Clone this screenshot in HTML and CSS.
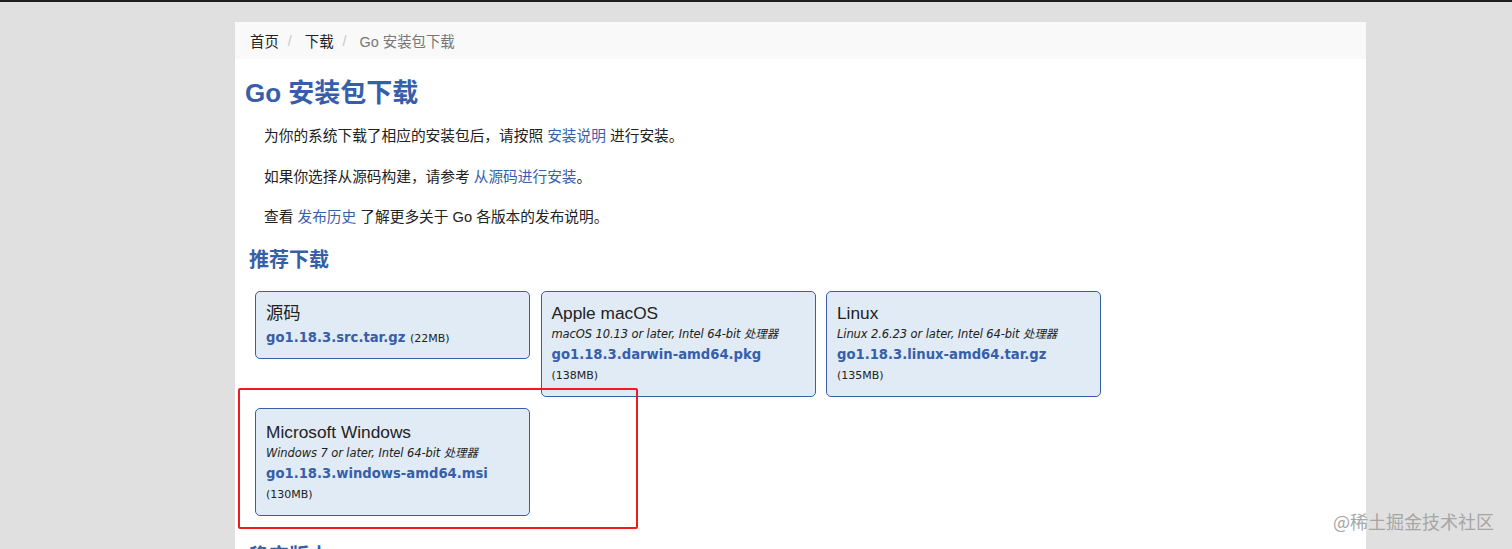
FILE: index.html
```html
<!DOCTYPE html>
<html lang="zh-CN">
<head>
<meta charset="utf-8">
<title>Go 安装包下载</title>
<link rel="stylesheet" href="styles.css">
</head>
<body>
<div class="topbar"></div>
<main class="panel">
  <nav class="crumbs">
    <a href="#">首页</a><span class="sep">/</span><a href="#">下载</a><span class="sep">/</span><span class="current">Go 安装包下载</span>
  </nav>
  <div class="content">
    <h1 class="title">Go 安装包下载</h1>
    <p class="para">为你的系统下载了相应的安装包后，请按照 <a href="#">安装说明</a> 进行安装。</p>
    <p class="para">如果你选择从源码构建，请参考 <a href="#">从源码进行安装</a>。</p>
    <p class="para">查看 <a href="#">发布历史</a> 了解更多关于 Go 各版本的发布说明。</p>
    <h2 class="section">推荐下载</h2>
    <div class="downloads">
      <a class="card card-src" href="#">
        <div class="platform">源码</div>
        <div class="filename">go1.18.3.src.tar.gz <span class="size">(22MB)</span></div>
      </a>
      <a class="card" href="#">
        <div class="platform">Apple macOS</div>
        <div class="reqs">macOS 10.13 or later, Intel 64-bit 处理器</div>
        <div class="filename">go1.18.3.darwin-amd64.pkg</div>
        <div class="size-line">(138MB)</div>
      </a>
      <a class="card" href="#">
        <div class="platform">Linux</div>
        <div class="reqs">Linux 2.6.23 or later, Intel 64-bit 处理器</div>
        <div class="filename">go1.18.3.linux-amd64.tar.gz</div>
        <div class="size-line">(135MB)</div>
      </a>
      <a class="card card-win" href="#">
        <div class="platform">Microsoft Windows</div>
        <div class="reqs">Windows 7 or later, Intel 64-bit 处理器</div>
        <div class="filename">go1.18.3.windows-amd64.msi</div>
        <div class="size-line">(130MB)</div>
      </a>
    </div>
    <h2 class="section section-next">稳定版本</h2>
  </div>
</main>
<div class="annotation"></div>
<div class="watermark">@稀土掘金技术社区</div>
</body>
</html>
```
FILE: styles.css
```css
html, body {
  margin: 0;
  padding: 0;
}
body {
  position: relative;
  height: 549px;
  overflow: hidden;
  background: #e0e0e0;
  font-family: "Liberation Sans", "Noto Sans CJK SC", sans-serif;
  font-size: 14.4px;
  color: #222;
}
a {
  text-decoration: none;
  color: #375eab;
}
.topbar {
  height: 2px;
  background: #1e1e1e;
}
.panel {
  margin: 20px 0 0 235px;
  width: 1131px;
  background: #fff;
  min-height: 600px;
}
.crumbs {
  height: 37px;
  background: #f9f9f9;
  display: flex;
  align-items: center;
  padding-left: 15px;
  font-size: 14.4px;
}
.crumbs a {
  color: #222;
}
.crumbs .sep {
  color: #c8c8c8;
  margin: 0 13px 0 9px;
}
.crumbs .current {
  color: #777;
}
.content {
  padding: 0 10px;
}
.title {
  margin: 16px 0 0 0;
  font-size: 26px;
  line-height: 36px;
  font-weight: bold;
  color: #375eab;
}
.para {
  margin: 15px 0 0 19px;
  font-size: 14.7px;
  line-height: 20px;
}
.para + .para {
  margin-top: 20.5px;
}
.section {
  margin: 19px 0 0 4px;
  font-size: 20px;
  line-height: 28px;
  font-weight: bold;
  color: #375eab;
}
.downloads {
  margin: 17px 0 0 10px;
  display: grid;
  grid-template-columns: repeat(3, 275px);
  column-gap: 10.5px;
  row-gap: 11px;
  align-items: start;
}
.card {
  display: block;
  box-sizing: border-box;
  width: 275px;
  padding: 10px;
  background: #e0ebf5;
  border: 1px solid #375eab;
  border-radius: 5px;
  color: #222;
}
.platform {
  font-size: 17.3px;
  line-height: 22px;
  color: #222;
}
.reqs {
  font-family: "DejaVu Sans", "Noto Sans CJK SC", sans-serif;
  font-size: 11.5px;
  font-style: italic;
  letter-spacing: -0.1px;
  line-height: 20px;
  color: #222;
}
.filename {
  font-family: "DejaVu Sans", "Noto Sans CJK SC", sans-serif;
  font-size: 13.2px;
  font-weight: bold;
  line-height: 22px;
  color: #375eab;
}
.size, .size-line {
  font-family: "DejaVu Sans", "Noto Sans CJK SC", sans-serif;
  font-size: 11px;
  font-weight: normal;
  color: #222;
}
.size-line {
  line-height: 20px;
}
.card-src {
  padding-bottom: 8px;
}
.card-src .filename {
  margin-top: 3px;
}
.card-win {
  padding-top: 12px;
}
.section-next {
  margin-top: 26px;
}
.annotation {
  position: absolute;
  left: 238px;
  top: 388px;
  width: 396px;
  height: 137px;
  border: 2.5px solid #f01c1c;
  border-radius: 2px;
}
.watermark {
  position: absolute;
  left: 1333px;
  top: 509px;
  font-family: "Noto Sans CJK SC", sans-serif;
  font-size: 18px;
  line-height: 24px;
  color: #a6a6a6;
}
```
